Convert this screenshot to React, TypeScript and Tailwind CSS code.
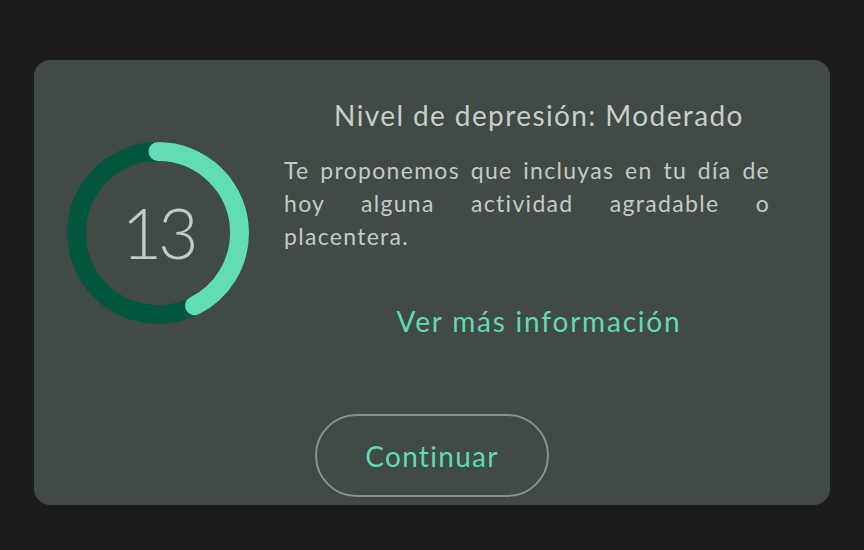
import React from 'react';

const SCORE = 13;
const R = 81.5;
const CIRC = 2 * Math.PI * R;
const ARC_DEG = 153;

function ScoreRing({ value }: { value: number }) {
  const dash = (ARC_DEG / 360) * CIRC;
  return (
    <div className="relative w-[182px] h-[182px] shrink-0">
      <svg width="182" height="182" viewBox="0 0 182 182">
        <circle cx="91" cy="91" r={R} fill="none" stroke="#00573d" strokeWidth="19" />
        <circle
          cx="91"
          cy="91"
          r={R}
          fill="none"
          stroke="#62dcb4"
          strokeWidth="19"
          strokeLinecap="round"
          strokeDasharray={`${dash} ${CIRC}`}
          transform="rotate(-90 91 91)"
        />
      </svg>
      <div className="absolute inset-0 flex items-center justify-center pb-[2px] text-[70px] font-light text-[#c2cac5] leading-none tracking-[-4px]">
        {value}
      </div>
    </div>
  );
}

export default function App() {
  return (
    <div
      className="w-[864px] h-[550px] bg-[#1b1d1c] pt-[60px] px-[34px]"
      style={{ fontFamily: 'Lato, "Noto Sans", sans-serif' }}
    >
      <div className="h-[445px] rounded-[16px] bg-[#414a45] flex flex-col overflow-hidden">
        {/* Top: ring + texts */}
        <div className="flex pl-[33px] pr-[36px] pt-[37px]">
          <div className="mt-[45px]">
            <ScoreRing value={SCORE} />
          </div>
          <div className="ml-[35px] flex-1">
            <h2 className="text-center text-[28px] leading-[36px] tracking-[1.4px] text-[#c8cec9] font-normal">
              Nivel de depresión: Moderado
            </h2>
            <p className="mt-[21px] pr-[24px] text-justify text-[23px] leading-[33px] tracking-[1.3px] text-[#c3cac5]">
              Te proponemos que incluyas en tu día de hoy alguna actividad agradable o placentera.
            </p>
            <div className="mt-[50px] text-center text-[28px] leading-[36px] tracking-[1.8px] text-[#5fdab1]">
              Ver más información
            </div>
          </div>
        </div>

        {/* Button */}
        <div className="flex justify-center mt-auto mb-[8px]">
          <button className="w-[234px] h-[83px] rounded-full border-2 border-[#8b908c] text-[28px] tracking-[1.3px] text-[#5fdab1]">
            Continuar
          </button>
        </div>
      </div>
    </div>
  );
}
